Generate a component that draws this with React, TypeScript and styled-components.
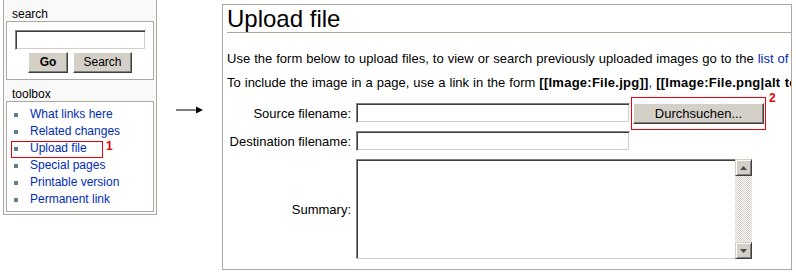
import styled, { createGlobalStyle } from 'styled-components';

const GlobalStyle = createGlobalStyle`
  html, body {
    margin: 0;
    padding: 0;
    background: #ffffff;
  }
  body {
    font-family: 'Liberation Sans', Arial, sans-serif;
    color: #000000;
    overflow: hidden;
  }
`;

const frame = '#aca89f';
const linkColor = '#002bb8';
const face = '#d4d0c8';

const Page = styled.div`
  display: flex;
  align-items: flex-start;
  width: 796px;
  height: 274px;
  overflow: hidden;
`;

const Sidebar = styled.div`
  flex-shrink: 0;
  margin-left: 3px;
  width: 152px;
  height: 214px;
  border: 1px solid ${frame};
  border-top: none;
  background: #f9f9f9;
  font-size: 12px;
`;

const PortletTitle = styled.div`
  height: 14px;
  padding: 7px 0 0 8px;
  line-height: 14px;
`;

const PortletBody = styled.div`
  margin: 0 2px;
  background: #ffffff;
  border: 1px solid ${frame};
`;

const SearchForm = styled.div`
  display: flex;
  flex-direction: column;
  align-items: center;
  gap: 2px;
  padding: 8px 0 6px;
`;

const ButtonRow = styled.div`
  display: flex;
  gap: 5px;
`;

const SunkenInput = styled.input<{ $width: number }>`
  box-sizing: border-box;
  width: ${(p) => p.$width}px;
  height: 20px;
  margin: 0;
  padding: 1px 3px;
  border: 1px solid;
  border-color: #808080 #ffffff #ffffff #808080;
  box-shadow: inset 1px 1px #404040, inset -1px -1px ${face};
  background: #ffffff;
  font: 12px 'Liberation Sans', Arial, sans-serif;
  outline: none;
`;

const ClassicButton = styled.button<{ $width: number; $bold?: boolean; $size?: number }>`
  box-sizing: border-box;
  width: ${(p) => p.$width}px;
  height: 21px;
  margin: 0;
  padding: 0;
  border: 1px solid;
  border-color: #ffffff #404040 #404040 #ffffff;
  box-shadow: inset -1px -1px #808080;
  background: ${face};
  color: #000000;
  font-family: 'Liberation Sans', Arial, sans-serif;
  font-size: ${(p) => p.$size ?? 12}px;
  font-weight: ${(p) => (p.$bold ? 'bold' : 'normal')};
  line-height: 19px;
`;

const ToolList = styled.ul`
  list-style: none;
  margin: 0;
  padding: 4px 0 3px;
`;

const ToolItem = styled.li`
  position: relative;
  display: flex;
  align-items: center;
  height: 17px;
  line-height: 17px;
`;

const Bullet = styled.span`
  width: 4px;
  height: 4px;
  margin: 1px 12px 0 7px;
  background: #5f7f8f;
`;

const ToolLink = styled.a`
  color: ${linkColor};
  text-decoration: none;
`;

const Highlight = styled.span<{ $top: number; $left: number; $right: number; $bottom: number }>`
  position: absolute;
  top: ${(p) => p.$top}px;
  left: ${(p) => p.$left}px;
  right: ${(p) => p.$right}px;
  bottom: ${(p) => p.$bottom}px;
  border: 1px solid #e8000b;
  pointer-events: none;
`;

const Marker = styled.span<{ $top: number; $left: number }>`
  position: absolute;
  top: ${(p) => p.$top}px;
  left: ${(p) => p.$left}px;
  color: #e8000b;
  font: bold 12px/12px 'Liberation Sans', Arial, sans-serif;
`;

const ArrowColumn = styled.div`
  flex-shrink: 0;
  width: 46px;
  padding: 100px 0 0 19px;
`;

const Content = styled.div`
  flex-shrink: 0;
  box-sizing: border-box;
  margin-top: 4px;
  width: 570px;
  height: 266px;
  padding-left: 4px;
  border: 1px solid ${frame};
  background: #ffffff;
  overflow: hidden;
  font-size: 13px;
`;

const Heading = styled.h1`
  margin: 0;
  font-size: 24px;
  font-weight: normal;
  line-height: 27px;
  border-bottom: 1px solid ${frame};
`;

const Para = styled.p<{ $top: number }>`
  margin: ${(p) => p.$top}px 0 0;
  line-height: 19px;
  white-space: nowrap;
  overflow: hidden;
  word-spacing: 0.4px;
`;

const Code = styled.b`
  letter-spacing: 0.25px;
`;

const TextLink = styled.a`
  color: ${linkColor};
  text-decoration: none;
`;

const FormGrid = styled.div`
  display: grid;
  grid-template-columns: 125px auto;
  column-gap: 4px;
  row-gap: 8px;
  align-items: center;
  margin-top: 11px;
`;

const Label = styled.label`
  text-align: right;
  padding-right: 1px;
  white-space: nowrap;
`;

const FieldRow = styled.div`
  display: flex;
  align-items: flex-start;
  gap: 3px;
  height: 20px;
`;

const Annotated = styled.span`
  position: relative;
  display: inline-flex;
`;

const SummaryBox = styled.div`
  display: flex;
  width: 396px;
  height: 100px;
`;

const SummaryArea = styled.textarea`
  flex: 1;
  box-sizing: border-box;
  margin: 0;
  padding: 2px;
  border: 1px solid;
  border-right: none;
  border-color: #808080 transparent ${face} #808080;
  box-shadow: inset 1px 1px #404040;
  background: #ffffff;
  resize: none;
  outline: none;
  font: 12px 'Liberation Sans', Arial, sans-serif;
`;

const ScrollBar = styled.div`
  display: flex;
  flex-direction: column;
  width: 17px;
`;

const ScrollButton = styled.div`
  box-sizing: border-box;
  display: flex;
  align-items: center;
  justify-content: center;
  height: 17px;
  border: 1px solid;
  border-color: ${face} #404040 #404040 ${face};
  box-shadow: inset 1px 1px #ffffff, inset -1px -1px #808080;
  background: ${face};
`;

const ScrollTrack = styled.div`
  flex: 1;
  background: repeating-conic-gradient(${face} 0% 25%, #ffffff 0% 50%) 0 0 / 2px 2px;
`;

const tools = [
  'What links here',
  'Related changes',
  'Upload file',
  'Special pages',
  'Printable version',
  'Permanent link',
];

const ScrollArrow = ({ down }: { down?: boolean }) => (
  <svg width="7" height="4" viewBox="0 0 7 4">
    <polygon points={down ? '0,0 7,0 3.5,4' : '3.5,0 7,4 0,4'} fill="#4a4a4a" />
  </svg>
);

export default function App() {
  return (
    <>
      <GlobalStyle />
      <Page>
        <Sidebar>
          <PortletTitle>search</PortletTitle>
          <PortletBody>
            <SearchForm>
              <SunkenInput $width={131} />
              <ButtonRow>
                <ClassicButton $width={40} $bold>
                  Go
                </ClassicButton>
                <ClassicButton $width={59}>Search</ClassicButton>
              </ButtonRow>
            </SearchForm>
          </PortletBody>
          <PortletTitle>toolbox</PortletTitle>
          <PortletBody>
            <ToolList>
              {tools.map((t) => (
                <ToolItem key={t}>
                  <Bullet />
                  <ToolLink href="#">{t}</ToolLink>
                  {t === 'Upload file' && (
                    <>
                      <Highlight $top={1} $left={4} $right={50} $bottom={-1} />
                      <Marker $top={0} $left={99}>
                        1
                      </Marker>
                    </>
                  )}
                </ToolItem>
              ))}
            </ToolList>
          </PortletBody>
        </Sidebar>

        <ArrowColumn>
          <svg width="28" height="8" viewBox="0 0 28 8">
            <line x1="0" y1="4" x2="22" y2="4" stroke="#000" strokeWidth="1" />
            <polygon points="20,0.5 27,4 20,7.5" fill="#000" />
          </svg>
        </ArrowColumn>

        <Content>
          <Heading>Upload file</Heading>
          <Para $top={16}>
            Use the form below to upload files, to view or search previously uploaded images go to
            the <TextLink href="#">list of</TextLink>
          </Para>
          <Para $top={5}>
            To include the image in a page, use a link in the form <Code>[[Image:File.jpg]]</Code>
            <TextLink href="#">, </TextLink>
            <Code>[[Image:File.png|alt text]]</Code>
          </Para>
          <FormGrid>
            <Label>Source filename:</Label>
            <FieldRow>
              <SunkenInput $width={274} />
              <Annotated>
                <ClassicButton $width={131} $size={13}>
                  Durchsuchen...
                </ClassicButton>
                <Highlight $top={-6} $left={-2} $right={-2} $bottom={-6} />
                <Marker $top={-11} $left={136}>
                  2
                </Marker>
              </Annotated>
            </FieldRow>
            <Label>Destination filename:</Label>
            <FieldRow>
              <SunkenInput $width={274} />
            </FieldRow>
            <Label>Summary:</Label>
            <SummaryBox>
              <SummaryArea />
              <ScrollBar>
                <ScrollButton>
                  <ScrollArrow />
                </ScrollButton>
                <ScrollTrack />
                <ScrollButton>
                  <ScrollArrow down />
                </ScrollButton>
              </ScrollBar>
            </SummaryBox>
          </FormGrid>
        </Content>
      </Page>
    </>
  );
}
